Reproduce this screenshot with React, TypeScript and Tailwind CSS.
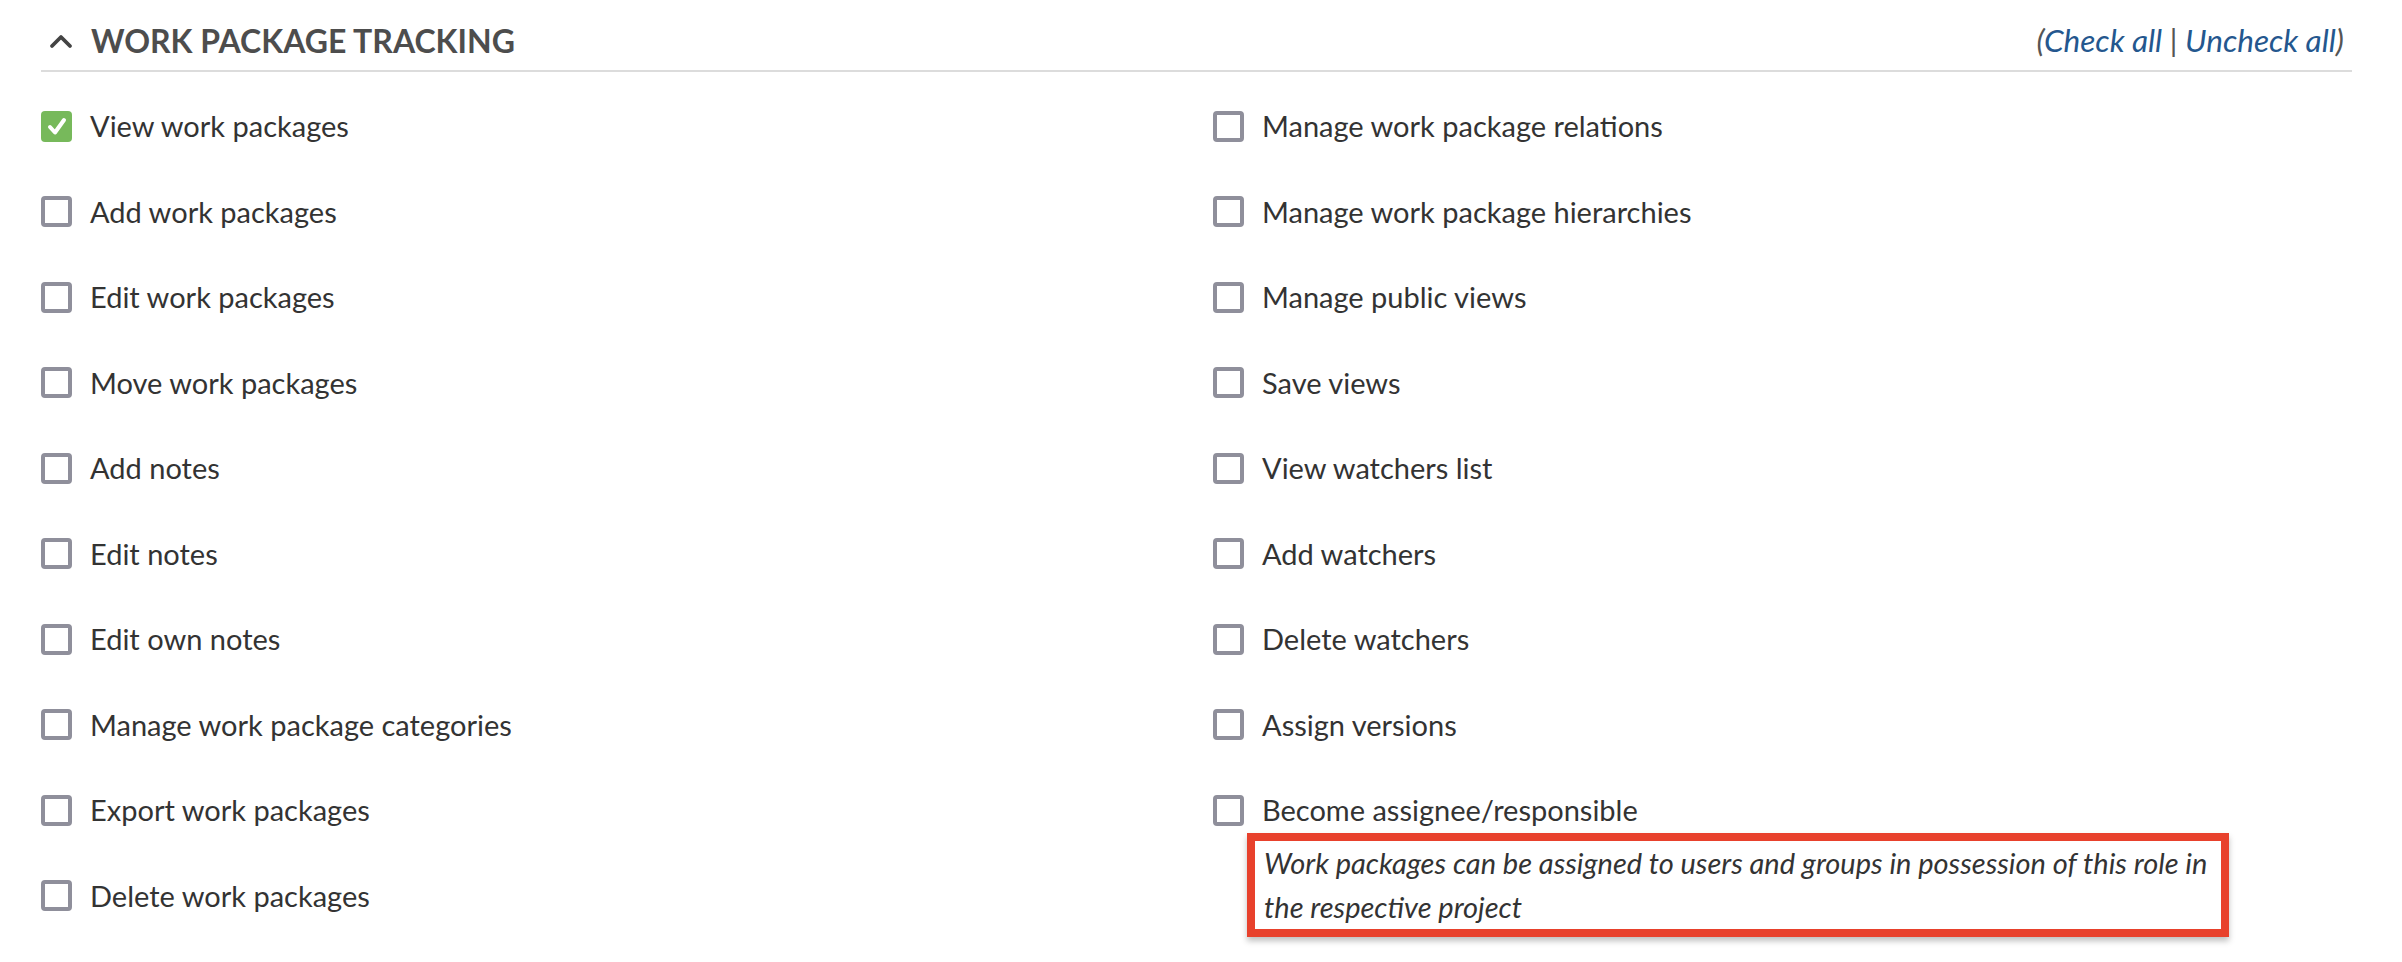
import React from 'react';

const leftItems = [
  { label: 'View work packages', checked: true },
  { label: 'Add work packages' },
  { label: 'Edit work packages' },
  { label: 'Move work packages' },
  { label: 'Add notes' },
  { label: 'Edit notes' },
  { label: 'Edit own notes' },
  { label: 'Manage work package categories' },
  { label: 'Export work packages' },
  { label: 'Delete work packages' },
];

const rightItems = [
  { label: 'Manage work package relations' },
  { label: 'Manage work package hierarchies' },
  { label: 'Manage public views' },
  { label: 'Save views' },
  { label: 'View watchers list' },
  { label: 'Add watchers' },
  { label: 'Delete watchers' },
  { label: 'Assign versions' },
  {
    label: 'Become assignee/responsible',
    help: 'Work packages can be assigned to users and groups in possession of this role in the respective project',
  },
];

const Checkbox: React.FC<{ checked?: boolean }> = ({ checked }) =>
  checked ? (
    <span className="flex h-[31px] w-[31px] shrink-0 items-center justify-center rounded-[4px] bg-[#77b95b]">
      <svg viewBox="0 0 24 24" className="h-[24px] w-[24px]" fill="none" stroke="#fff" strokeWidth="4" strokeLinecap="round" strokeLinejoin="round">
        <polyline points="5,13 10,18.5 19,6" />
      </svg>
    </span>
  ) : (
    <span className="block h-[31px] w-[31px] shrink-0 rounded-[4px] border-[4px] border-[#8f8f9b] bg-white" />
  );

type Item = { label: string; checked?: boolean; help?: string };

const Row: React.FC<{ item: Item }> = ({ item }) => (
  <div>
    <label className="flex h-[40px] items-center gap-[18px] text-[29px] text-[#333333]">
      <Checkbox checked={item.checked} />
      <span>{item.label}</span>
    </label>
    {item.help && (
      <div className="ml-[34px] mt-[3px] w-[982px] border-[8px] border-[#e8412c] bg-white pl-[9px] text-[29px] italic leading-[44px] text-[#333333] shadow-[0_4px_6px_rgba(0,0,0,0.25)]">
        {item.help}
      </div>
    )}
  </div>
);

const App: React.FC = () => {
  return (
    <div className="min-h-[962px] bg-white pl-[41px] pr-[50px] font-['Lato','Liberation_Sans',sans-serif]">
      <div className="flex h-[72px] items-center justify-between border-b-[2px] border-[#dcdcdc] px-[8px] pt-[13px] pb-[1px]">
        <div className="flex items-center gap-[18px]">
          <svg viewBox="0 0 24 16" className="h-[16px] w-[24px]" fill="none" stroke="#444" strokeWidth="3.8" strokeLinecap="round" strokeLinejoin="round">
            <polyline points="3,13 12,4 21,13" />
          </svg>
          <h2 className="text-[32px] font-bold text-[#4d4d4d]">WORK PACKAGE TRACKING</h2>
        </div>
        <div className="text-[31.5px] italic text-[#555]">
          (<a className="text-[#24578e]" href="#">Check all</a> | <a className="text-[#24578e]" href="#">Uncheck all</a>)
        </div>
      </div>

      <div className="mt-[34px] grid grid-cols-[1172px_1fr]">
        <div className="flex flex-col gap-[45.5px]">
          {leftItems.map((item, i) => (
            <Row key={i} item={item} />
          ))}
        </div>
        <div className="flex flex-col gap-[45.5px]">
          {rightItems.map((item, i) => (
            <Row key={i} item={item} />
          ))}
        </div>
      </div>
    </div>
  );
};

export default App;
